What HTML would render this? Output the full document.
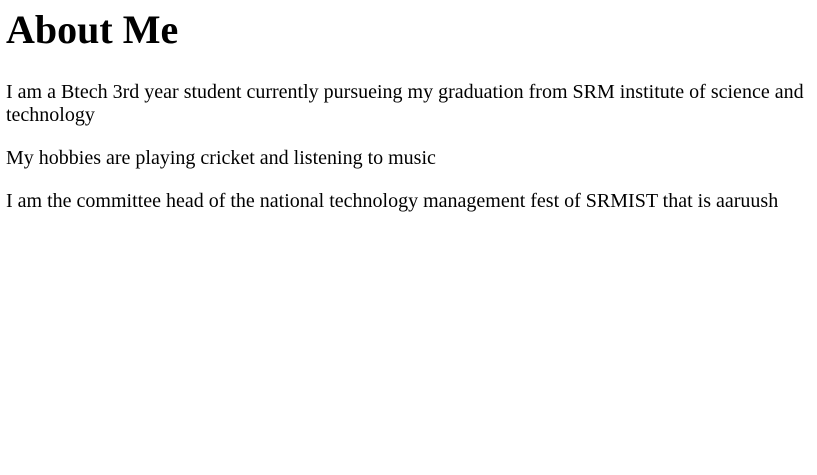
<!DOCTYPE html>
<html><head><style>
body{margin:7px 6px;font-family:"Liberation Serif",serif;font-size:20px;color:#000;background:#fff}
h1{font-size:40px;margin:0 0 27.8px 0;line-height:46px}
p{margin:20px 0;line-height:23px}
</style></head><body>
<h1>About Me</h1>
<p>I am a Btech 3rd year student currently pursueing my graduation from SRM institute of science and technology</p>
<p>My hobbies are playing cricket and listening to music</p>
<p>I am the committee head of the national technology management fest of SRMIST that is aaruush</p>
</body></html>
